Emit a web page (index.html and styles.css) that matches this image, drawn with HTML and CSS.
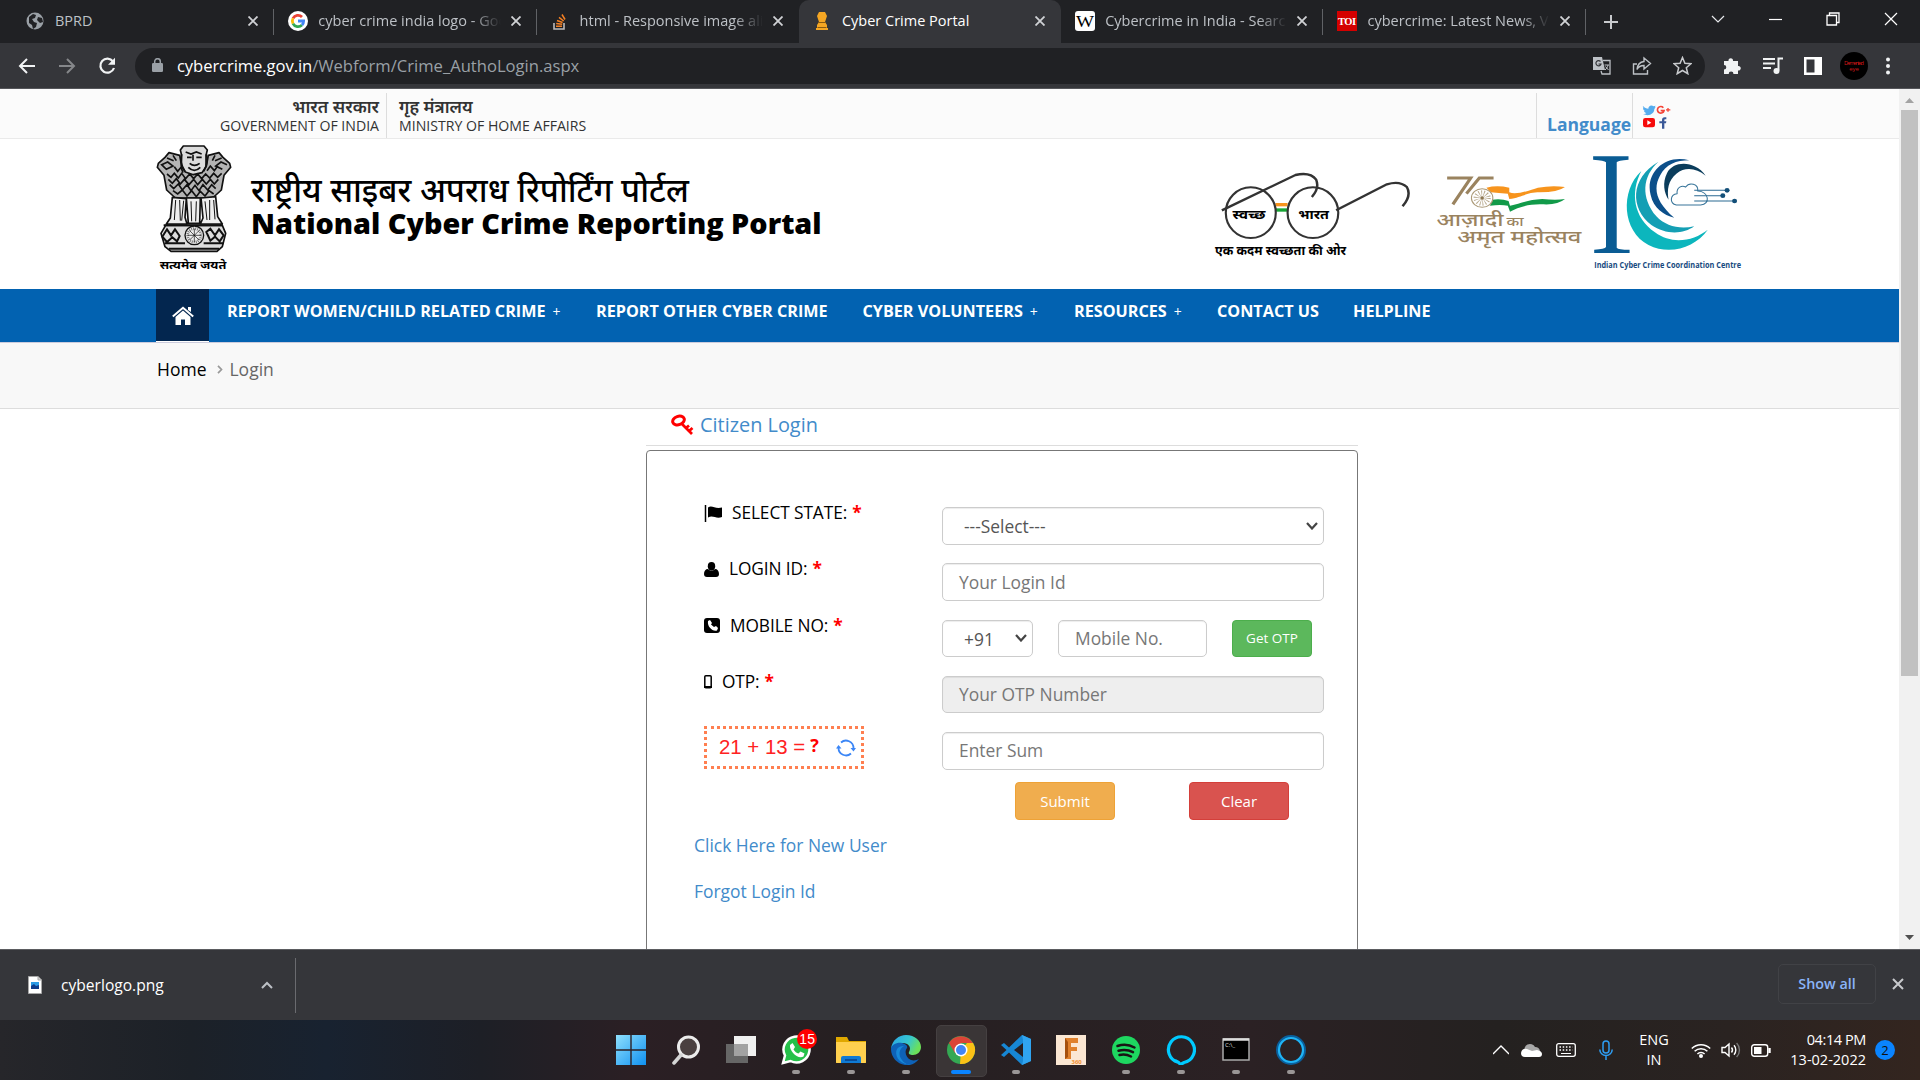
FILE: index.html
```html
<!DOCTYPE html>
<html lang="en">
<head>
<meta charset="utf-8">
<title>Cyber Crime Portal</title>
<link rel="stylesheet" href="styles.css">
</head>
<body>
<div class="tabs">
  <div class="tab first">
    <svg class="fav" viewBox="0 0 18 18"><circle cx="9" cy="9" r="8.5" fill="#9aa0a6"/><path d="M3 5l4-3 3 1-1 3-3 1 2 3 3 1-1 4-3 2-1-4-3-2zM12 5l4 1 1 4-3 1-3-3z" fill="#202124"/></svg>
    <span class="tt">BPRD</span><svg class="x"><use href="#x"/></svg>
  </div>
  <div class="tab">
    <svg class="fav g" viewBox="0 0 20 20"><circle cx="10" cy="10" r="10" fill="#fff"/><g fill="none" stroke-width="2.8"><path d="M14 6A5.6 5.6 0 0 0 5 7.4" stroke="#ea4335"/><path d="M5 7.4a5.6 5.6 0 0 0 0 5.2" stroke="#fbbc05"/><path d="M5 12.6a5.6 5.6 0 0 0 9 1.4" stroke="#34a853"/><path d="M14 14a5.6 5.6 0 0 0 1.6-4H10" stroke="#4285f4"/></g></svg>
    <span class="tt fade">cyber crime india logo - Google</span><svg class="x"><use href="#x"/></svg>
  </div>
  <div class="tab last-before">
    <svg class="fav" viewBox="0 0 18 18"><path d="M3 11v6h10v-6" fill="none" stroke="#bcbbbb" stroke-width="1.6"/><path d="M5 14.2h6M5.2 11.5l6 .8M6 8.5l5.600 2M8 5.300l4.700 3.700M11 2.500l3 5" stroke="#f48024" stroke-width="1.500"/></svg>
    <span class="tt fade">html - Responsive image align</span><svg class="x"><use href="#x"/></svg>
  </div>
  <div class="tab active">
    <svg class="fav" viewBox="0 0 18 18"><path d="M6 0h6l2 4-2 6 2 3v3h1v2H3v-2h1v-3l2-3-2-6z" fill="#f5a623"/><path d="M5 10.500h8M4.500 15.500h9" stroke="#8a5a10"/></svg>
    <span class="tt">Cyber Crime Portal</span><svg class="x"><use href="#x"/></svg>
  </div>
  <div class="tab">
    <svg class="fav g" viewBox="0 0 20 20"><rect width="20" height="20" rx="3" fill="#fff"/><text x="10" y="15.500" text-anchor="middle" class="serif" font-size="16" textLength="18" lengthAdjust="spacingAndGlyphs">W</text></svg>
    <span class="tt fade">Cybercrime in India - Search</span><svg class="x"><use href="#x"/></svg>
  </div>
  <div class="tab">
    <svg class="fav g" viewBox="0 0 20 20"><rect width="20" height="20" fill="#d40000"/><text x="10" y="14" text-anchor="middle" class="serif" font-size="10.500" font-weight="700" fill="#fff" textLength="18">TOI</text></svg>
    <span class="tt fade">cybercrime: Latest News, Videos</span><svg class="x"><use href="#x"/></svg>
  </div>
  <svg class="plus" viewBox="0 0 14 14"><path d="M7 0v14M0 7h14" stroke="#c8cacd" stroke-width="2"/></svg>
  <div class="wc">
    <svg width="14" height="8" viewBox="0 0 14 8"><path d="M1 1l6 6 6-6" fill="none" stroke="#e8eaed" stroke-width="1.200"/></svg>
    <svg width="13" height="14" viewBox="0 0 13 14"><path d="M0 7.500h13" stroke="#fff" stroke-width="1.200"/></svg>
    <svg width="14" height="14" viewBox="0 0 14 14"><path d="M1 3.500h9.500V13H1zM3.500 3.500V1H13v9.500h-2.500" fill="none" stroke="#fff" stroke-width="1.300"/></svg>
    <svg width="14" height="14" viewBox="0 0 14 14"><path d="M1 1l12 12M13 1L1 13" stroke="#fff" stroke-width="1.200"/></svg>
  </div>
</div>
<div class="toolbar">
  <svg class="ic" viewBox="0 0 18 18"><path d="M17 9H2M9 2L2 9l7 7" fill="none" stroke="#f1f3f4" stroke-width="2"/></svg>
  <svg class="ic" viewBox="0 0 18 18"><path d="M1 9h15M9 2l7 7-7 7" fill="none" stroke="#85878a" stroke-width="2"/></svg>
  <svg class="ic" viewBox="0 0 18 18"><path d="M15 4.500A7 7 0 1 0 16 11" fill="none" stroke="#f1f3f4" stroke-width="2.200"/><path d="M17 .8v7h-7z" fill="#f1f3f4"/></svg>
  <div class="omni">
    <svg width="11" height="15" viewBox="0 0 11 15"><rect y="5" width="11" height="9" rx="1.200" fill="#9aa0a6"/><path d="M2.700 6V3.500a2.800 2.800 0 0 1 5.600 0V6" fill="none" stroke="#9aa0a6" stroke-width="1.500"/></svg>
    <span class="url"><b>cybercrime.gov.in</b><i>/Webform/Crime_AuthoLogin.aspx</i></span>
    <div class="oi">
      <svg width="19" height="19" viewBox="0 0 19 19"><path d="M1 1h9l3 13H1z" fill="#bdc1c6"/><path d="M11 4.500h7V18h-8l-1-3" fill="none" stroke="#bdc1c6" stroke-width="1.300"/><path d="M8.500 5.500A2.600 2.600 0 1 0 9 8H6.500" fill="none" stroke="#35363a" stroke-width="1.200"/><path d="M12.500 9h4.500M16 9c-.5 2.500-1.500 3.500-3 5M13.500 10.500l3 3.500" fill="none" stroke="#bdc1c6"/></svg>
      <svg width="20" height="19" viewBox="0 0 20 19"><path d="M5 8H1.500v10h14v-4" fill="none" stroke="#bdc1c6" stroke-width="1.400"/><path d="M12 2l6.500 5.500L12 13v-3.500c-3.500 0-5.500 1-7 4 .4-4.500 2.500-7.500 7-8z" fill="none" stroke="#bdc1c6" stroke-width="1.400"/></svg>
      <svg width="19" height="19" viewBox="0 0 19 19"><path d="M9.500 1.500l2.400 5.700 6.100.5-4.700 4 1.500 6-5.300-3.200-5.300 3.200 1.500-6L1 7.700l6.100-.5z" fill="none" stroke="#c8cacd" stroke-width="1.500"/></svg>
    </div>
  </div>
  <div class="ti">
    <svg width="19" height="19" viewBox="0 0 19 19"><path d="M1 5h4.500a2.300 2.300 0 1 1 4.500 0h5v5a2.300 2.300 0 1 1 0 4.500V18h-4.500a2.400 2.400 0 0 0-4.800 0H1v-4.500a2.300 2.300 0 0 0 0-4.600z" fill="#f1f3f4"/></svg>
    <svg width="20" height="18" viewBox="0 0 20 18"><path d="M0 2h12M0 6.500h12M0 11h8" stroke="#f1f3f4" stroke-width="2"/><path d="M15.500 13.500V1.500H20" fill="none" stroke="#f1f3f4" stroke-width="2"/><circle cx="13.500" cy="14" r="3" fill="#f1f3f4"/></svg>
    <svg width="18" height="18" viewBox="0 0 18 18"><path d="M0 0h18v18H0zM2.500 2.500v13h8v-13z" fill="#fff" fill-rule="evenodd"/></svg>
    <svg class="av" width="28" height="28" viewBox="0 0 28 28"><circle cx="14" cy="14" r="14"/><text x="14" y="13" text-anchor="middle" font-size="6" fill="#d01818" textLength="20">Demented</text><text x="14" y="19" text-anchor="middle" font-size="6" fill="#d01818">eye</text></svg>
    <svg width="4" height="18" viewBox="0 0 4 18"><circle cx="2" cy="2.500" r="2" fill="#f1f3f4"/><circle cx="2" cy="9" r="2" fill="#f1f3f4"/><circle cx="2" cy="15.500" r="2" fill="#f1f3f4"/></svg>
  </div>
</div>

<div class="view">
<div class="page">
  <div class="strip">
    <div class="gov"><div class="hi">भारत सरकार</div><div>GOVERNMENT OF INDIA</div></div>
    <div class="mha"><div class="hi">गृह मंत्रालय</div><div>MINISTRY OF HOME AFFAIRS</div></div>
    <a class="lang">Language</a>
    <svg class="social" viewBox="0 0 84 72"><path d="M0 3c5 6 10 8 16 8 0-9 9-13 16-7l6-2-3 5 3 0-4 5C34 26 18 36 0 27c5 0 8-1 10-3-4-1-6-3-7-6h3C2 16 0 13 0 9l3 1C0 8-1 5 0 3z" fill="#55acee"/><path d="M61 8a10 10 0 1 0 2 9H53" fill="none" stroke="#f44336" stroke-width="5"/><path d="M75 9v11M69 14.500h13" stroke="#f44336" stroke-width="4"/><rect x="0" y="39" width="36" height="28" rx="7" fill="#f60b0b"/><path d="M13 46v14l12-7z" fill="#fff"/><path d="M58 71V55h-8v-6h8v-4c0-7 4-10 13-8v6c-5-1-6 0-6 3v3h6l-1 6h-5v16z" fill="#3b5998" transform="translate(-1 0)"/></svg>
  </div>
  <div class="head">
    <svg class="emblem" viewBox="0 3 300 420">
      <g stroke="#111" stroke-width="5" stroke-linejoin="round">
        <path d="M110 84L104 52 72 44 60 58 40 76l-3 12 20 24 8 44 26 24h112l26-24 8-44 20-24-3-12-20-18-12-14-32 8-6 32z" fill="#b4b4b4"/>
        <path d="M115 24h62l10 12-4 16v34l-12 18-26 6-24-8-12-18 1-32-4-16z" fill="#dcdcdc"/>
        <path d="M82 178l-6 62-12 18h62l-6-20 4-56zM124 180l6 76h34l2-76zM168 180l6 60-8 18h66l-14-22-6-60z" fill="#eee"/>
        <path d="M62 262h170l10 24-10 40-16 14H78l-18-14-12-40z" fill="#ddd"/>
      </g>
      <g fill="none" stroke="#111">
        <path d="M122 42l16 6 16-6 16 6M126 58h14M154 58h16M134 76q14 12 30 0M130 88q18 18 36 0M144 50v18M110 48q-8 24 10 52M184 48q8 24-8 52" stroke-width="5"/>
        <path d="M50 80l18-8 16 12-20 10zM66 60l20 8M246 80l-18-8-16 12 20 10M230 60l-20 8M84 52l10 16M210 52l-8 16" stroke-width="5"/>
        <path d="M66 108l12 10 10-12 12 14 10-14 12 16 12-14 12 14 12-14 12 14 12-14 12 12 12-14 12 12 12-12M70 124l12 12 12-14 12 16 12-14 14 16 14-16 12 16 14-16 12 14 12-14 12 14 12-14M74 140l12 12 14-14 12 18 14-16 12 18 12-16 12 16 12-18 14 16 12-16 12 12M84 158l14 10 14-12 14 18 14-16 14 18 12-16 14 14 12-16 14 10M88 86l10 14 10-12 6 16M186 98l10-14 12 14 10-14" stroke-width="5"/>
        <path d="M92 186l-4 60M104 186l2 62M116 188l-6 60M138 190l2 60M154 190l-2 60M180 190l6 56M194 186v60M206 186l4 58" stroke-width="3"/>
        <path d="M56 262h178M60 316h60M176 316h60M72 332h150M52 296l14-22 12 18 12-18 14 20-8 16-14-12-16 14zM184 282l12-10 14 20 12-18 14 18-12 18-14-14-14 12z" stroke-width="6"/>
        <circle cx="148" cy="292" r="28" fill="#eee" stroke-width="4"/><circle cx="148" cy="292" r="20" stroke-width="8" stroke="#777" stroke-dasharray="3 3"/>
        <path d="M128 292h40M148 272v40M134 278l28 28M162 278l-28 28" stroke-width="2"/>
      </g>
      <text x="44" y="393" font-size="32" font-weight="700" textLength="200" lengthAdjust="spacingAndGlyphs">सत्यमेव जयते</text>
    </svg>
    <div class="title"><div class="thi">राष्ट्रीय साइबर अपराध रिपोर्टिंग पोर्टल</div><div class="ten">National Cyber Crime Reporting Portal</div></div>
    <div class="logos">
      <svg class="l1" viewBox="40 225 560 275" preserveAspectRatio="none">
        <path d="M212 324h34v10h-34z" fill="#f7941d"/><path d="M212 340h34v10h-34z" fill="#17a535"/>
        <g fill="none" stroke="#333" stroke-width="6"><ellipse cx="143" cy="353" rx="70" ry="76"/><ellipse cx="317" cy="353" rx="71" ry="76"/><path d="M62 346L268 240q42-10 58 14 10 26-12 52M382 346L524 268q36-12 56 8 14 26-12 58" stroke-width="7"/></g>
        <text x="92" y="373" font-size="38" font-weight="700" textLength="92" lengthAdjust="spacingAndGlyphs">स्वच्छ</text><text x="276" y="373" font-size="38" font-weight="700" textLength="86" lengthAdjust="spacingAndGlyphs">भारत</text>
        <text x="43" y="481" font-size="38" font-weight="700" textLength="367" lengthAdjust="spacingAndGlyphs">एक कदम स्वच्छता की ओर</text>
      </svg>
      <svg class="l2" viewBox="660 240 420 225" preserveAspectRatio="none">
        <path d="M694 249h66L710 328M824 249h-40L748 296" fill="none" stroke="#9a835f" stroke-width="9"/>
        <path d="M804 278q30-8 64 0v14c20 10 60-8 80-14q40-8 76-2-20 16-70 16c-40 0-50 16-86 20l-4-16q-26-2-48-4z" fill="#f7941d"/>
        <path d="M820 314q26-4 46 4l4 14c30-6 50-18 90-20q40 4 64 0-20 18-60 16c-40-2-70 8-94 22l-6-18q-20-4-50 0z" fill="#119a49"/>
        <ellipse cx="792" cy="309" rx="30" ry="28" fill="#fff" stroke="#ab9977" stroke-width="3"/><ellipse cx="792" cy="309" rx="14" ry="13" fill="none" stroke="#b7a88c" stroke-width="20" stroke-dasharray="2 4"/><circle cx="792" cy="309" r="5" fill="#8d7650"/>
        <g fill="#9a835f" font-weight="500"><text x="664" y="394" font-size="54" textLength="188" lengthAdjust="spacingAndGlyphs">आज़ादी</text><text x="860" y="394" font-size="36" textLength="48" lengthAdjust="spacingAndGlyphs">का</text><text x="722" y="445" font-size="54" textLength="348" lengthAdjust="spacingAndGlyphs">अमृत महोत्सव</text></g>
      </svg>
      <svg class="l3" viewBox="1095 175 430 350" preserveAspectRatio="none">
        <path d="M1101 182h99v10q-30 2-33 8v256q4 6 36 6v10h-99v-10q30-2 33-8V200q-4-6-36-8z" fill="#0a5c94"/>
        <path d="M1236 226c-60 60-54 180 20 222 60 32 130 8 166-46-40 34-100 46-148 8-60-44-70-120-38-184z" fill="#0cb6bd"/>
        <path d="M1284 198c-80 50-80 140-20 190 40 30 90 28 120 4-40 10-80 0-106-30-44-56-40-120 6-164z" fill="#149fb4"/>
        <path d="M1370 194c-70-20-124 40-108 104 8 40 36 60 66 68-50-46-60-86-40-126 16-34 46-46 82-46z" fill="#0c4f8a"/>
        <path d="M1416 240c-30-46-90-46-108-8-14 30-8 60 4 80-4-30-2-56 22-78 26-22 56-16 82 6z" fill="#0b3d5c"/>
        <path d="M1334 328c-20-4-18-32 2-34-2-20 14-26 24-20 10-16 36-10 34 12 32 2 36 40 8 42z" fill="#fff" stroke="#38759a" stroke-width="3"/>
        <path d="M1384 284h90M1384 300h80M1384 316h112" stroke="#2b6a92" stroke-width="3"/><g fill="#134f78"><circle cx="1476" cy="284" r="7"/><circle cx="1464" cy="300" r="7"/><circle cx="1497" cy="316" r="7"/></g>
        <text x="1104" y="516" font-size="25" font-weight="700" fill="#174a80" textLength="411" lengthAdjust="spacingAndGlyphs">Indian Cyber Crime Coordination Centre</text>
      </svg>
    </div>
  </div>
  <div class="nav">
    <div class="home"><svg width="22" height="19" viewBox="0 0 22 19"><path d="M11 4.500l7.500 6.500v8H13v-5.500H9V19H3.500v-8z" fill="#fff"/><path d="M.8 10.500L11 1.800l10.200 8.700" fill="none" stroke="#fff" stroke-width="2"/><path d="M16 1h3v5l-3-2z" fill="#fff"/></svg></div>
    <span class="n1">REPORT WOMEN/CHILD RELATED CRIME<em>+</em></span>
    <span class="n2">REPORT OTHER CYBER CRIME</span>
    <span class="n3">CYBER VOLUNTEERS<em>+</em></span>
    <span class="n4">RESOURCES<em>+</em></span>
    <span class="n5">CONTACT US</span>
    <span class="n6">HELPLINE</span>
  </div>
  <div class="crumb"><span class="c1">Home</span><svg width="6" height="9" viewBox="0 0 6 9"><path d="M1 .8L4.500 4.500 1 8.200" fill="none" stroke="#999" stroke-width="1.700"/></svg><span>Login</span></div>
  <div class="login">
    <div class="lh"><svg width="23" height="21" viewBox="0 0 23 21"><ellipse cx="7.500" cy="6.500" rx="6" ry="4.200" transform="rotate(-20 7.500 6.500)" fill="none" stroke="red" stroke-width="3"/><path d="M10 9l11 11M15 14l3-2.500M18 17l3.500-3" stroke="red" stroke-width="2.800" fill="none"/></svg><span>Citizen Login</span></div>
    <div class="box">
      <div class="row"><label><svg width="19" height="17" viewBox="0 0 19 17"><path d="M1.500 0v17" stroke="#000" stroke-width="1.500"/><path d="M4 2.500c4-3 7 2 14 0v9.500c-6 2.500-9-2.500-14 .5z"/></svg><span class="la">SELECT STATE:</span><b>*</b></label><div class="inp sel"><span>---Select---</span><svg class="dd"><use href="#dd"/></svg></div></div>
      <div class="row"><label><svg width="15" height="15" viewBox="0 0 15 15"><ellipse cx="7.500" cy="4.200" rx="3.700" ry="4.200"/><path d="M0 12c0-3 1.500-5 4-5 2 2 5 2 7 0 2.500 0 4 2 4 5 0 2-1 3-3 3H3c-2 0-3-1-3-3z"/></svg><span class="lb">LOGIN ID:</span><b>*</b></label><div class="inp"><span>Your Login Id</span></div></div>
      <div class="row"><label><svg width="16" height="15" viewBox="0 0 16 15"><rect width="16" height="15" rx="3"/><path d="M4 3l2-1 2 3-1 1.500 3 2.500L12 8l2 2-1 2.500c-4 1.500-10-3.500-9-9.500z" fill="#fff"/></svg><span class="lb">MOBILE NO:</span><b>*</b></label><div class="inp cc"><span>+91</span><svg class="dd"><use href="#dd"/></svg></div><div class="inp mob"><span>Mobile No.</span></div><div class="btn otp">Get OTP</div></div>
      <div class="row"><label><svg width="8" height="14" viewBox="0 0 8 14"><rect x=".8" y=".8" width="6.400" height="12" rx="1" fill="none" stroke="#000" stroke-width="1.500"/><path d="M0 12h8" stroke="#000" stroke-width="2"/></svg><span class="lb">OTP:</span><b>*</b></label><div class="inp dis"><span>Your OTP Number</span></div></div>
      <div class="row"><div class="capcell"><div class="cap"><span>21 + 13 =</span><b>?</b><svg width="20" height="18" viewBox="0 0 20 18"><path d="M17.500 9A7.500 7.500 0 0 0 5 3.500M2.500 9A7.500 7.500 0 0 0 15 14.500" fill="none" stroke="#3b86f6" stroke-width="1.800"/><path d="M0 9.500L2.500 6l3 3.500zM20 9l-2.500 3.500-3-3.500z" fill="#3b86f6"/></svg></div></div><div class="inp"><span>Enter Sum</span></div></div>
      <div class="acts"><div class="btn sub">Submit</div><div class="btn clr">Clear</div></div>
      <a class="lk">Click Here for New User</a>
      <a class="lk">Forgot Login Id</a>
    </div>
  </div>
</div>
<div class="sb"><svg width="9" height="5" viewBox="0 0 9 5"><path d="M0 5h9L4.500 0z" fill="#a3a3a3"/></svg><div class="thumb"></div><svg class="dn" width="9" height="5" viewBox="0 0 9 5"><path d="M0 0h9L4.500 5z" fill="#505050"/></svg></div>
</div>

<div class="shelf">
  <svg width="14" height="18" viewBox="0 0 14 18"><path d="M.5.500h9.500l3.500 3.500v13.500H.5z" fill="#fff" stroke="#a8a8a8"/><path d="M10 .5V4h3.500" fill="#ccc" stroke="#a8a8a8"/><rect x="3" y="6" width="8" height="7" fill="#2b9be6"/><path d="M3 13v-3l3-2 2 2 3-1v4z" fill="#0f3c8c"/></svg>
  <span class="fn">cyberlogo.png</span>
  <svg class="up" width="12" height="8" viewBox="0 0 12 8"><path d="M1 7l5-5 5 5" fill="none" stroke="#bdc1c6" stroke-width="2"/></svg>
  <div class="rule"></div>
  <div class="showall">Show all</div>
  <svg class="xs" viewBox="0 0 12 12"><path d="M1 1l10 10M11 1L1 11" stroke="#c8cacd" stroke-width="2"/></svg>
</div>
<div class="task">
  <div class="apps">
    <div class="app"><svg viewBox="0 0 30 30"><defs><linearGradient id="w" x2="1" y2="1"><stop stop-color="#8fe0fd"/><stop offset="1" stop-color="#0f90f0"/></linearGradient></defs><path d="M0 0h14.300v14.300H0zM15.700 0H30v14.300H15.700zM0 15.700h14.300V30H0zM15.700 15.700H30V30H15.700z" fill="url(#w)"/></svg></div>
    <div class="app"><svg viewBox="0 0 30 30"><circle cx="17.500" cy="12" r="10" fill="#4a4040" stroke="#ececec" stroke-width="3"/><path d="M10 20l-7 8" stroke="#d5d5d5" stroke-width="3.500" stroke-linecap="round"/></svg></div>
    <div class="app"><svg viewBox="0 0 30 30"><rect x="8" y="1" width="22" height="20" fill="#f0f0f0"/><rect y="9" width="22" height="19" fill="#666"/><rect x="8" y="9" width="14" height="12" fill="#a2a2a2"/></svg></div>
    <div class="app run"><svg viewBox="0 0 30 30"><path d="M2 28l2-7.500A13 13 0 1 1 9.500 26z" fill="#25c14a" stroke="#fff" stroke-width="2.500"/><path d="M9 10l2.500-2 2.500 4-1.500 2.500c1.500 2.500 3 3.500 5 4l2-2 4 2-1 3C17 25 8 16 9 10z" fill="#fff"/></svg><span class="bd">15</span></div>
    <div class="app run"><svg viewBox="0 0 30 30"><path d="M0 2h11l2 4h17v22H0z" fill="#e0a800"/><path d="M0 7h30v20q0 1-1 1H1q-1 0-1-1z" fill="#ffd04f"/><path d="M5 28v-5q0-2 2-2h16q2 0 2 2v5z" fill="#0f7ad4"/><path d="M9 25h12" stroke="#083f86" stroke-width="1.500"/></svg></div>
    <div class="app run"><svg viewBox="0 0 30 30"><defs><linearGradient id="e" x2="1" y2=".4"><stop stop-color="#2aa3e8"/><stop offset=".6" stop-color="#36c6d0"/><stop offset="1" stop-color="#6be05a"/></linearGradient></defs><path d="M0 14C1 5 8 0 15 0c9 0 15 6 15 12 0 5-4 8-8 8-3 0-5-1-4-3 3-5-1-9-6-9-6 0-11 3-12 6z" fill="url(#e)"/><path d="M0 14c0-4 6-7 11-6 4 1 6 3 5 5-3 4-1 10 4 12 3 1 6 0 8-1-4 5-9 7-14 6C6 29 0 22 0 14z" fill="#0e62b8"/><path d="M13 11c-5 3-6 9-2 14 2 3 5 5 8 4C8 30 3 20 6 14q2-3 7-3z" fill="#1788d8"/></svg></div>
    <div class="app run on"><svg viewBox="0 0 30 30"><circle cx="15" cy="15" r="14" fill="#34a853"/><path d="M15 15l6-7h6.100A14 14 0 0 1 14 29z" fill="#fbc116"/><path d="M2.900 8L9 18l6-10h12A14 14 0 0 0 2.900 8z" fill="#dc4437"/><circle cx="15" cy="15" r="6.500" fill="#fff"/><circle cx="15" cy="15" r="5" fill="#4285f4"/></svg></div>
    <div class="app run"><svg viewBox="0 0 30 30"><path d="M21 0l9 4v22l-9 4L8 17.500 3 22l-3-2 5.500-5L0 10l3-2 5 4.500zM22 8l-9 7 9 7z" fill="#1787d4" fill-rule="evenodd"/><path d="M21 0l9 4v22l-9 4 1-4V5z" fill="#30a4f0"/></svg></div>
    <div class="app"><svg viewBox="0 0 30 30"><rect width="30" height="30" fill="#fbe7d3"/><path d="M9 3h13v5h-7v4h6v4h-6v8H9z" fill="#e0812d"/><path d="M9 3l3 4v15l-3 2z" fill="#a6500d"/><text x="15.500" y="28.500" font-size="6" font-weight="700" fill="#ef8f35">360</text></svg></div>
    <div class="app run"><svg viewBox="0 0 30 30"><circle cx="15" cy="15" r="14" fill="#1ed760"/><path d="M6.500 11q9-3 17 1.500M7.500 15.700q8-2 14.500 1.500M8.500 20q6-1.500 11.500 1.500" fill="none" stroke="#191414" stroke-width="2.500" stroke-linecap="round"/></svg></div>
    <div class="app run"><svg viewBox="0 0 30 30"><path d="M12 27.300A13 13 0 1 1 18 27.500L14.500 29.500Q13 27 9 25.500" fill="none" stroke="#00caff" stroke-width="3.200"/></svg></div>
    <div class="app run"><svg viewBox="0 0 30 30"><rect x="2" y="4" width="26" height="21" fill="#000" stroke="#aaa" stroke-width="1.500"/><path d="M2 4.500h26" stroke="#ddd" stroke-width="2.500"/><text x="4" y="12" font-size="6" fill="#ddd">C:\_</text></svg></div>
    <div class="app run"><svg viewBox="0 0 30 30"><circle cx="15" cy="15" r="13" fill="none" stroke="#0a5f9c" stroke-width="4"/><circle cx="15" cy="15" r="12" fill="none" stroke="#20b4f5" stroke-width="2.200"/></svg></div>
  </div>
  <div class="tray">
    <svg width="16" height="10" viewBox="0 0 16 10"><path d="M0 9l8-8 8 8" fill="none" stroke="#fff" stroke-width="1.300"/></svg>
    <svg class="t2" width="21" height="14" viewBox="0 0 21 14"><path d="M4 9a5 5 0 0 1 10-5 5 5 0 0 1 5 4l-8 4z" fill="#a8a8a8"/><path d="M0 10q1-5 6-4l5 2 5-1q5 1 5 4 0 3-3 3H4q-4 0-4-4z" fill="#fff"/></svg>
    <svg class="t3" width="20" height="14" viewBox="0 0 20 14"><rect x=".7" y=".7" width="18.600" height="12.600" rx="2" fill="none" stroke="#fff" stroke-width="1.300"/><path d="M3.500 4h13M3.500 7h13" stroke="#fff" stroke-width="1.500" stroke-dasharray="1.500 1.700"/><path d="M5 10.500h10" stroke="#fff"/></svg>
    <svg class="t4" width="14" height="20" viewBox="0 0 14 20"><rect x="4" y="1" width="6" height="12" rx="3" fill="none" stroke="#2e9df2" stroke-width="1.500"/><path d="M.8 9.500a6.200 6 0 0 0 12.400 0M7 16v4" fill="none" stroke="#2e9df2" stroke-width="1.500"/></svg>
    <div class="eng"><span>ENG</span><span>IN</span></div>
    <svg class="t5" width="20" height="15" viewBox="0 0 20 15"><path d="M.8 5.500a13 13 0 0 1 18.400 0M3.600 8.300a9 9 0 0 1 12.800 0M6.400 11a5 5 0 0 1 7.200 0" fill="none" stroke="#fff" stroke-width="1.500"/><circle cx="10" cy="13" r="2" fill="#fff"/></svg>
    <svg class="t6" width="20" height="16" viewBox="0 0 20 16"><path d="M1 5.500h3L8 2v12L4 10.500H1z" fill="none" stroke="#fff" stroke-width="1.400"/><path d="M10.500 5.500a4 4 0 0 1 0 5M13 3.300a7 7 0 0 1 0 9.400" fill="none" stroke="#fff" stroke-width="1.400"/><path d="M15.600 1a10 10 0 0 1 0 14" fill="none" stroke="#777" stroke-width="1.400"/></svg>
    <svg class="t7" width="20" height="13" viewBox="0 0 20 13"><rect x=".7" y=".7" width="16" height="11.600" rx="2.500" fill="none" stroke="#fff" stroke-width="1.400"/><rect x="3" y="3" width="7.500" height="7" fill="#fff"/><path d="M18.500 4v5" stroke="#fff" stroke-width="2.400"/></svg>
    <div class="clock"><span class="time">04:14 PM</span><span>13-02-2022</span></div>
    <div class="two">2</div>
  </div>
</div>
<svg class="defs"><symbol id="x" viewBox="0 0 10 10"><path d="M.5.500l9 9M9.500.500l-9 9" stroke="#d0d2d5" stroke-width="1.800"/></symbol><symbol id="dd" viewBox="0 0 12 8"><path d="M1 1l5 5.500L11 1" fill="none" stroke="#444" stroke-width="2.200"/></symbol></svg>
</body>
</html>
```
FILE: styles.css
```css
* { box-sizing: border-box; }
body { margin: 0; width: 1920px; height: 1080px; overflow: hidden; display: flex; flex-direction: column; background: #fff; font-family: "Open Sans", "Noto Sans", "Noto Sans Devanagari", sans-serif; }
svg { display: block; flex: none; }
span, .hi, .thi, .ten, .btn { white-space: nowrap; }
.defs { width: 0; height: 0; position: absolute; }
.serif { font-family: "Liberation Serif", serif; }

.tabs { height: 43px; flex: none; background: #202124; display: flex; align-items: center; padding-left: 12px; }
.tab { width: 262.3px; height: 43px; flex: none; display: flex; align-items: center; padding: 0 16px 2px 14px; position: relative; color: #bdc1c6; font-size: 14.500px; }
.tab:not(.active):not(.last-before)::after { content: ""; position: absolute; right: 0; top: 9px; width: 1px; height: 26px; background: #606266; }
.tab.active { background: #35363a; border-radius: 10px 10px 0 0; color: #fff; }
.fav { width: 18px; height: 18px; margin-right: 11px; }
.fav.g { width: 20px; height: 20px; margin-right: 10px; }
.tt { flex: 1; width: 0; overflow: hidden; margin-right: 10px; }
.fade { -webkit-mask-image: linear-gradient(90deg, #000 84%, transparent); }
.x { width: 10px; height: 10px; }
.plus { width: 14px; height: 14px; margin-left: 18px; }
.wc { margin-left: auto; display: flex; align-items: center; gap: 44px; padding: 0 22px 5px 0; }

.toolbar { height: 46px; flex: none; background: #35363a; border-bottom: 1px solid #55565a; display: flex; align-items: center; padding-left: 18px; gap: 22px; }
.ic { width: 18px; height: 18px; }
.omni { width: 1570px; height: 36px; margin-left: -3px; border-radius: 18px; background: #202124; display: flex; align-items: center; padding: 0 13px 0 17px; }
.url { margin-left: 14px; font-size: 16.600px; line-height: 30px; color: #9aa0a6; display: flex; }
.url b { font-weight: 400; color: #fff; letter-spacing: -.08px; }
.url i { font-style: normal; }
.oi { margin-left: auto; display: flex; gap: 21px; }
.ti { display: flex; align-items: center; gap: 21px; margin-left: -4px; }
.av { margin: 0 -3px; }

.view { height: 860px; flex: none; display: flex; }
.page { width: 1899px; overflow: hidden; }
.sb { width: 21px; background: #f1f1f1; display: flex; flex-direction: column; align-items: center; padding-top: 9px; }
.thumb { width: 17px; height: 566px; margin-top: 7px; background: #c1c1c1; }
.dn { margin-top: auto; margin-bottom: 9px; }

.strip { height: 50px; background: #fbfbfb; border-bottom: 1px solid #eaeaea; display: flex; color: #333; font-size: 14.120px; line-height: 20px; }
.gov { width: 387px; margin-top: 4px; padding: 3px 7px 0 0; text-align: right; border-right: 1px solid #ddd; }
.mha { width: 1150px; margin-top: 4px; padding: 3px 0 0 12px; border-right: 1px solid #ddd; }
.hi { font-size: 17.400px; font-weight: 600; }
.lang { width: 96px; margin-top: 4px; padding: 21px 0 0 10px; border-right: 1px solid #ddd; color: #428bca; font-weight: 700; font-size: 17.500px; }
.social { width: 30px; height: 24px; margin: 16px 0 0 9px; }

.head { height: 150px; display: flex; }
.emblem { width: 100px; height: 140px; margin-left: 145px; }
.title { width: 963px; padding: 32px 0 0 6px; color: #000; }
.thi { font-size: 32.900px; line-height: 38px; font-weight: 500; }
.ten { font-size: 28.780px; line-height: 28px; font-weight: 800; }
.logos { display: flex; margin-left: 6px; }
.l1 { width: 200px; height: 91.700px; margin-top: 31px; }
.l2 { width: 150px; height: 75px; margin: 36px 6px 0 21px; }
.l3 { width: 153.600px; height: 116.700px; margin-top: 15px; }

.nav { height: 54px; background: #0262b1; border-bottom: 1px solid #ccd; display: flex; color: #fff; font-size: 16.200px; font-weight: 700; line-height: 44px; padding-left: 156px; }
.nav > span { flex: none; }
.nav em { font-style: normal; font-weight: 400; font-size: 14px; margin-left: 7px; }
.home { width: 53px; border-bottom: 1px solid #fff; background: #03264f; display: flex; justify-content: center; padding-top: 17px; margin-right: 18px; }
.n1 { width: 369px; } .n2 { width: 266.500px; } .n3 { width: 211.500px; } .n4 { width: 143px; } .n5 { width: 136px; }

.crumb { height: 66px; background: #f8f8f8; border-bottom: 1px solid #ddd; display: flex; padding: 13px 0 0 157px; font-size: 17.500px; line-height: 26px; color: #666; }
.crumb svg { margin: 9px 6px 0 11px; }
.c1 { color: #000; }

.login { width: 712px; margin-left: 646px; }
.lh { height: 37px; border-bottom: 1px solid #ddd; margin-bottom: 4px; padding-left: 25px; display: flex; color: #428bca; font-size: 19.900px; line-height: 31px; }
.lh svg { margin: 5px 6px 0 0; }
.box { height: 540px; border: 1px solid #777; border-radius: 4px; padding: 56px 0 0 47px; }
.row { height: 56.250px; display: flex; align-items: flex-start; padding-left: 10px; }
.row label, .capcell { width: 238px; flex: none; display: flex; align-items: center; height: 14px; color: #000; font-size: 17.300px; line-height: 14px; }
.row label { margin-top: -1px; letter-spacing: -.08px; }
.row label b { color: #f00; margin-left: 5px; }
.la { margin-left: 9px; } .lb { margin-left: 10px; }
.inp { width: 382px; height: 37.500px; border: 1px solid #ccc; border-radius: 5px; box-shadow: inset 0 1px 1px rgba(0,0,0,.075); background: #fff; display: flex; align-items: center; padding: 0 5px 1px 16px; font-size: 17.400px; color: #777; }
.sel, .cc { padding-left: 21px; padding-bottom: 0; color: #555; }
.sel span, .cc span { padding-top: 1px; }
.dd { width: 12px; height: 8px; margin-left: auto; }
.cc { width: 91px; }
.mob { width: 149px; margin: 0 25px; }
.dis { background: #eee; }
.btn { height: 37.500px; border-radius: 4px; color: #fff; font-size: 15px; display: flex; align-items: center; justify-content: center; padding-bottom: 1px; }
.otp { width: 80px; background: #5cb85c; border: 1px solid #4cae4c; font-size: 13.500px; }
.capcell { align-items: flex-start; }
.cap { width: 160px; height: 43px; flex: none; margin-top: -6px; border: 3px dotted coral; display: flex; align-items: center; padding-left: 12px; color: #f22; font: 20.400px "Liberation Sans", sans-serif; }
.cap b { font: 700 18px "Open Sans", sans-serif; margin: -5px 17px 0 5px; color: #f00; }
.acts { height: 38px; display: flex; padding-left: 321px; gap: 74px; margin-top: -6px; margin-bottom: 2px; }
.sub { width: 100px; background: #f0ad4e; border: 1px solid #eea236; }
.clr { width: 100px; background: #d9534f; border: 1px solid #d43f3a; }
.lk { display: block; height: 46px; line-height: 46px; color: #428bca; font-size: 17.460px; }

.shelf { height: 71px; flex: none; background: #35363a; border-top: 1px solid #5b5c60; display: flex; align-items: center; padding-left: 28px; color: #fff; font-size: 15.600px; position: relative; z-index: 1; }
.fn { width: 200px; margin-left: 19px; }
.up { margin-right: 22px; }
.rule { width: 1px; height: 55px; background: #6a6b6f; }
.showall { width: 98px; height: 40px; margin: 0 0 2px 1482px; padding-bottom: 1px; border: 1px solid #414246; border-radius: 5px; color: #8ab4f8; font-size: 14.300px; font-weight: 600; display: flex; align-items: center; justify-content: center; }
.xs { width: 12px; height: 12px; margin: 0 0 2px 16px; }

.task { height: 60px; flex: none; background: linear-gradient(90deg, #26262a 0, #1c2128 10%, #182230 17%, #1d1f26 25%, #2b1f24 33%, #251f21 45%, #2b2124 65%, #242120 78%, #2a2321 90%, #33251f 100%); display: flex; padding-left: 603px; position: relative; z-index: 1; }
.apps { display: flex; width: 716px; }
.app { width: 55.050px; height: 60px; padding-top: 15px; display: flex; justify-content: center; position: relative; }
.app > svg { width: 30px; height: 30px; }
.run::after { content: ""; position: absolute; bottom: 6px; width: 8px; height: 4px; border-radius: 2px; background: #9a9696; }
.on::before { content: ""; position: absolute; left: 3px; top: 5px; width: 49px; height: 50px; border-radius: 5px; background: #3a3536; border: 1px solid #454041; }
.on > svg { position: relative; }
.on::after { width: 20px; background: #0a84ff; }
.bd { position: absolute; left: 29px; top: 9px; width: 20px; height: 20px; border-radius: 50%; background: #f00; color: #fff; font: 14px/20px "Liberation Sans", sans-serif; text-align: center; }
.tray { display: flex; align-items: center; margin-left: 174px; color: #fff; font-size: 14.500px; line-height: 20px; }
.t2 { margin-left: 12px; } .t3 { margin-left: 14px; } .t4 { margin-left: 23px; }
.eng { width: 40px; margin-left: 21px; display: flex; flex-direction: column; align-items: center; }
.t5 { margin-left: 17px; } .t6 { margin-left: 10px; } .t7 { margin-left: 10px; }
.clock { width: 86px; margin-left: 9px; display: flex; flex-direction: column; align-items: flex-end; }
.time { letter-spacing: -.4px; }
.two { width: 20px; height: 20px; margin-left: 9px; border-radius: 50%; background: #0a84ff; color: #111; text-align: center; font-size: 13px; }
```
